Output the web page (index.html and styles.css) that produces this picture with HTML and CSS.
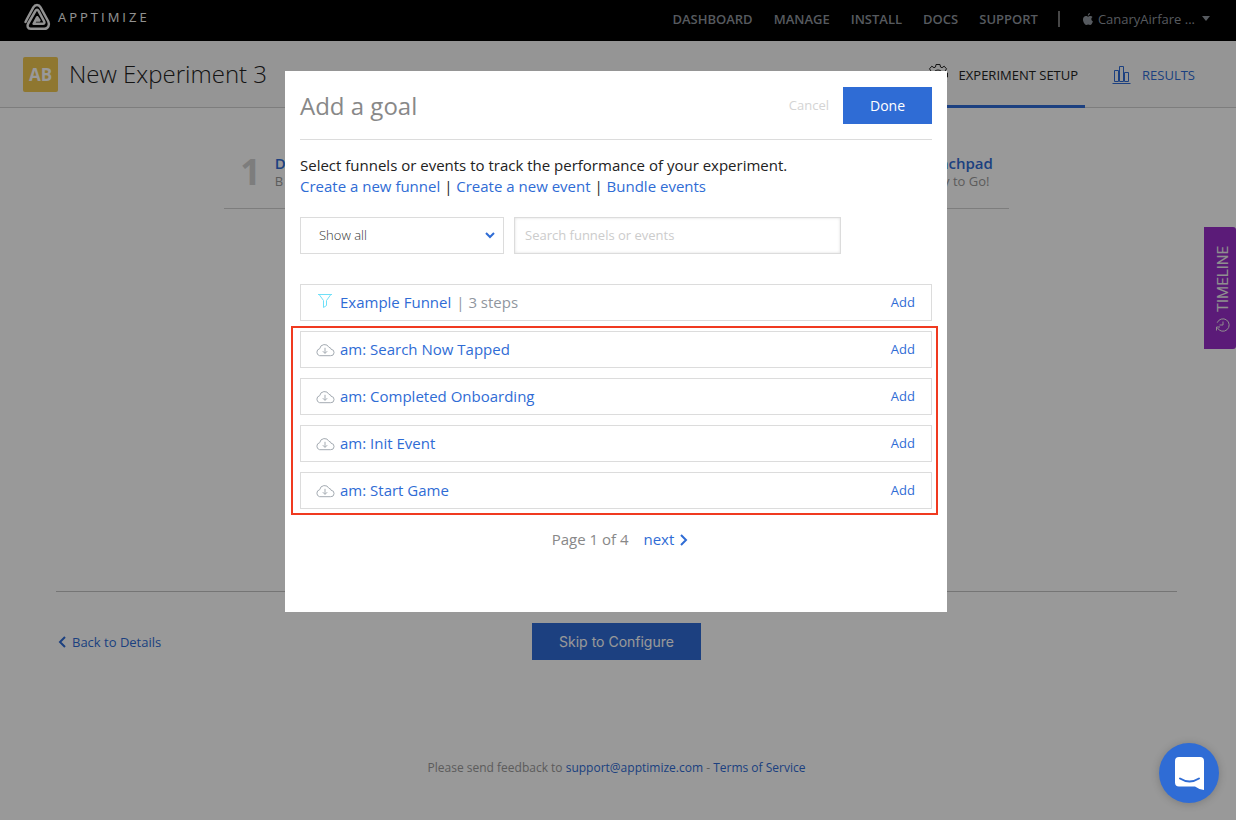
FILE: index.html
```html
<!DOCTYPE html>
<html lang="en">
<head>
<meta charset="utf-8">
<meta name="viewport" content="width=device-width, initial-scale=1">
<title>New Experiment 3 - Apptimize</title>
<link rel="stylesheet" href="styles.css">
</head>
<body>
<svg class="sprite" aria-hidden="true">
  <symbol id="cloud" viewBox="0 0 20 14">
    <path d="M4.6 12.7h11a3.2 3.2 0 0 0 .5-6.4A2.2 2.2 0 0 0 14 4.400 4.900 4.900 0 0 0 4.700 5.700a3.600 3.600 0 0 0-.1 7z" fill="none" stroke="currentColor"/>
    <path d="M10 4.800v5.400M7.800 8.200l2.200 2.200 2.200-2.200" fill="none" stroke="currentColor"/>
  </symbol>
</svg>

<header class="topbar">
  <a class="brand" href="#">
    <svg width="28" height="28" viewBox="0 0 28 28" fill="none" stroke="currentColor" stroke-width="2.500" stroke-linecap="round" stroke-linejoin="round" aria-hidden="true">
      <path d="M2.500 19 4 16 10.500 4.200c1.500-2.900 5.500-2.900 7 0l7.800 14.300c1.600 3.400-.1 7.300-3.800 7.300H7.600c-3 0-3.800-2.900-2.400-5.300l7.300-12.700c.8-1.300 2.200-1.300 3 0l5.700 10.700c.6 1.300 0 2.300-1.300 2.300h-9.300L14.200 14.200l2.200 3.200h-2.500"/>
    </svg>
    <span>APPTIMIZE</span>
  </a>
  <nav class="mainnav">
    <a href="#">DASHBOARD</a>
    <a href="#">MANAGE</a>
    <a href="#">INSTALL</a>
    <a href="#">DOCS</a>
    <a href="#">SUPPORT</a>
  </nav>
  <button class="account" type="button">
    <svg width="10" height="12" viewBox="0 0 10 12" fill="currentColor" aria-hidden="true"><path d="M7 0c.1 1.400-1 2.600-2.200 2.600C4.700 1.300 5.800.1 7 0zM9.500 4.100c-1.800 1.200-1.500 3.600.4 4.300C9.300 10.200 8.300 12 7.200 12c-.8 0-1.200-.5-2-.5s-1.200.5-1.900.5C1.700 12 0 9 0 6.600 0 4.300 1.400 3.100 2.900 3.100c.9 0 1.700.6 2.200.6.5 0 1.300-.7 2.400-.7.800 0 1.500.4 2 1.100z"/></svg>
    <span>CanaryAirfare ...</span>
    <svg class="caret" width="8" height="5" viewBox="0 0 8 5" fill="currentColor" aria-hidden="true"><path d="M0 0h8L4 5z"/></svg>
  </button>
</header>

<div class="subheader">
  <span class="badge">AB</span>
  <h1>New Experiment 3</h1>
  <nav class="tabs">
    <a class="tab current" href="#">
      <svg width="20" height="24" viewBox="0 0 20 24" fill="none" stroke="currentColor" aria-hidden="true"><path d="M8 1.500h4l.5 2.500 1.500.7 2.200-1.500 2.300 2.600-1.300 2.100.6 1.600 1.700.5v4l-1.700.5-.6 1.600 1.300 2.100-2.300 2.600-2.200-1.500-1.500.7-.5 2.500H8l-.5-2.500-1.500-.7-2.200 1.500-2.300-2.600 1.300-2.100-.6-1.600L.5 14v-4l1.700-.5.6-1.600-1.300-2.100 2.300-2.600L6 4.700 7.500 4z"/><circle cx="10" cy="12" r="5"/></svg>
      EXPERIMENT SETUP
    </a>
    <a class="tab" href="#">
      <svg width="19" height="19" viewBox="0 0 19 19" fill="none" stroke="currentColor" aria-hidden="true"><path d="M2.500 16.500v-11h4v11zM7.500 16.500v-15h4v15zM12.500 16.500v-9h4v9zM.5 18.500h18"/></svg>
      RESULTS
    </a>
  </nav>
</div>

<main class="page">
  <ol class="steps">
    <li><b>1</b><div><a href="#">D</a><span>B</span></div></li>
    <li><div><a href="#">Launchpad</a><span>Ready to Go!</span></div></li>
  </ol>
  <div class="actions">
    <a class="back" href="#"><svg width="8" height="12" viewBox="0 0 8 12" fill="none" stroke="currentColor" stroke-width="2" aria-hidden="true"><path d="M7 1 2 6l5 5"/></svg>Back to Details</a>
    <button class="primary skip" type="button">Skip to Configure</button>
  </div>
</main>

<footer class="footer">Please send feedback to <a href="#">support@apptimize.com</a> - <a href="#">Terms of Service</a></footer>

<button class="timeline" type="button">
  <svg width="14" height="14" viewBox="0 0 14 14" fill="none" stroke="currentColor" aria-hidden="true"><path d="M12.800 9.300A6.200 6.200 0 1 1 12.500 4M7 10.500V7h3.500M13.500 1.500V5H10"/></svg>
  <span>TIMELINE</span>
</button>

<div class="overlay">
  <section class="modal" role="dialog" aria-modal="true" aria-labelledby="goal-title">
    <div class="modal-head">
      <h2 id="goal-title">Add a goal</h2>
      <button class="cancel" type="button">Cancel</button>
      <button class="primary done" type="button">Done</button>
    </div>
    <p class="intro">Select funnels or events to track the performance of your experiment.</p>
    <p class="links"><a href="#">Create a new funnel</a> | <a href="#">Create a new event</a> | <a href="#">Bundle events</a></p>
    <div class="filters">
      <div class="select">
        <select aria-label="Filter goals"><option>Show all</option></select>
        <svg width="10" height="7" viewBox="0 0 10 7" fill="none" stroke="currentColor" stroke-width="2" aria-hidden="true"><path d="M1 1l4 4 4-4"/></svg>
      </div>
      <input type="text" aria-label="Search funnels or events" placeholder="Search funnels or events">
    </div>
    <ul class="goals">
      <li class="goal">
        <svg class="funnel" width="20" height="20" viewBox="0 0 20 20" fill="none" stroke="currentColor" aria-hidden="true"><path d="M3 1.500h14M4.500 2l4 5.500v7l3-2V7.500l4-5.500"/></svg>
        <a href="#">Example Funnel</a><span class="note">| 3 steps</span>
        <button type="button">Add</button>
      </li>
    </ul>
    <ul class="goals marked">
      <li class="goal"><svg width="20" height="14"><use href="#cloud"/></svg><a href="#">am: Search Now Tapped</a><button type="button">Add</button></li>
      <li class="goal"><svg width="20" height="14"><use href="#cloud"/></svg><a href="#">am: Completed Onboarding</a><button type="button">Add</button></li>
      <li class="goal"><svg width="20" height="14"><use href="#cloud"/></svg><a href="#">am: Init Event</a><button type="button">Add</button></li>
      <li class="goal"><svg width="20" height="14"><use href="#cloud"/></svg><a href="#">am: Start Game</a><button type="button">Add</button></li>
    </ul>
    <div class="pager">
      <span>Page 1 of 4</span>
      <a href="#">next<svg width="8" height="12" viewBox="0 0 8 12" fill="none" stroke="currentColor" stroke-width="2" aria-hidden="true"><path d="M1 1l5 5-5 5"/></svg></a>
    </div>
  </section>
</div>

<button class="chat" type="button" aria-label="Open chat">
  <svg width="29" height="33" viewBox="0 0 29 33" aria-hidden="true"><path d="M4 0h21a4 4 0 0 1 4 4v29q-5-.5-9-3.500H4a4 4 0 0 1-4-4V4a4 4 0 0 1 4-4z" fill="#fff"/><path d="M5 21.500q9.500 6 19 0" fill="none" stroke="#2f6cd5" stroke-width="2" stroke-linecap="round"/></svg>
</button>
</body>
</html>
```
FILE: styles.css
```css
:root {
  --blue: #2f6cd5;
  --line: #dcdcdc;
}

* { box-sizing: border-box; }

body {
  margin: 0;
  background: #fff;
  color: #222;
  font: 14px/20px "Open Sans", sans-serif;
}

a { color: var(--blue); text-decoration: none; }
h1, h2, p, ul, ol { margin: 0; padding: 0; }
ul, ol { list-style: none; }
svg { flex: none; }
.sprite { position: absolute; width: 0; height: 0; }

button {
  margin: 0;
  padding: 0;
  border: 0;
  background: none;
  color: inherit;
  font: inherit;
  cursor: pointer;
}

.primary { height: 37px; background: var(--blue); color: #fff; }

/* top bar */
.topbar {
  display: flex;
  align-items: center;
  height: 41px;
  padding: 0 26px 4px 23px;
  background: #000;
  color: #90969e;
}
.topbar a { color: inherit; }
.topbar .brand {
  display: flex;
  align-items: center;
  gap: 7px;
  margin-right: auto;
  padding-bottom: 4px;
  color: #f4f4f4;
  font-size: 13px;
  letter-spacing: 3px;
}
.mainnav {
  display: flex;
  gap: 21px;
  padding-right: 20px;
  border-right: 2px solid #777;
  font-size: 13px;
  font-weight: 600;
  line-height: 16px;
}
.account {
  display: flex;
  align-items: center;
  gap: 5px;
  margin-left: 23px;
  font-size: 13px;
  line-height: 16px;
}
.caret { margin-left: 2px; }

/* experiment header */
.subheader {
  display: flex;
  align-items: center;
  height: 67px;
  padding: 0 41px 0 23px;
  border-bottom: 1px solid #d0d0d0;
  background: #f8f8f8;
}
.badge {
  width: 35px;
  border-radius: 2px;
  background: #eec650;
  color: #fff;
  font-size: 17px;
  font-weight: 700;
  line-height: 35px;
  text-align: center;
}
.subheader h1 {
  margin-left: 11px;
  font-size: 24px;
  font-weight: 300;
  line-height: 36px;
}
.tabs { display: flex; gap: 27px; height: 67px; margin-left: auto; }
.tab { display: flex; align-items: center; gap: 11px; padding-top: 1px; font-size: 13px; }
.tab.current { padding: 4px 7px 0 0; border-bottom: 3px solid var(--blue); color: #222; }

/* page behind the dialog */
.page { padding: 40px 59px 0 56px; }
.steps {
  display: flex;
  justify-content: space-between;
  width: 70%;
  height: 61px;
  margin: 0 auto;
  padding: 0 16px;
  border-bottom: 1px solid #d0d0d0;
}
.steps li { display: flex; gap: 14px; }
.steps b { color: #d0d0d0; font-size: 36px; line-height: 48px; }
.steps div { display: flex; flex-direction: column; padding-top: 5px; }
.steps a { font-size: 15px; font-weight: 600; }
.steps span { color: #999; font-size: 13px; line-height: 16px; }

.actions {
  display: grid;
  grid-template-columns: 1fr auto 1fr;
  align-items: center;
  margin-top: 382px;
  padding-top: 31px;
  border-top: 1px solid #c4c4c4;
}
.back { display: flex; align-items: center; gap: 6px; padding-left: 2px; font-size: 13px; }
.skip { padding: 0 27px; font-family: Inter, sans-serif; font-size: 14px; }

.footer {
  margin-top: 98px;
  padding-right: 3px;
  color: #999;
  font-size: 12px;
  text-align: center;
}

.timeline {
  position: fixed;
  top: 227px;
  right: 0;
  display: flex;
  align-items: center;
  gap: 6px;
  width: 32px;
  height: 122px;
  padding: 17px 11px 17px 5px;
  border-radius: 3px 0 0 3px;
  background: #982dc8;
  color: #eee;
  font: 15px/16px Roboto, sans-serif;
  writing-mode: vertical-rl;
  transform: rotate(180deg);
}

/* dialog */
.overlay {
  position: fixed;
  inset: 0;
  padding: 71px 16px 0 12px;
  background: rgba(0, 0, 0, .4);
}
.modal {
  max-width: 662px;
  margin: 0 auto;
  padding: 16px 15px 62px;
  background: #fff;
  font-size: 15px;
  line-height: 21px;
}
.modal-head {
  display: flex;
  align-items: center;
  padding-bottom: 15px;
  border-bottom: 1px solid var(--line);
}
.modal h2 { margin-right: auto; color: #888; font-size: 24px; font-weight: 400; line-height: 36px; }
.cancel { margin-right: 14px; color: #d4d4d4; font-size: 13px; }
.done { width: 89px; font-size: 14px; }
.intro { margin-top: 15px; }

.filters { display: flex; gap: 10px; margin-top: 20px; }
.select { position: relative; width: 204px; color: var(--blue); }
.select svg { position: absolute; right: 9px; top: 15px; pointer-events: none; }
.filters select,
.filters input {
  width: 100%;
  height: 37px;
  border: 1px solid var(--line);
  border-radius: 0;
  background: #fff;
  font: 13px "Open Sans", sans-serif;
}
.filters select { padding: 0 18px 1px; color: #333; font-weight: 300; appearance: none; }
.filters input { max-width: 327px; padding: 0 10px 1px; box-shadow: inset 0 0 3px #ddd; }
.filters input::placeholder { color: #ccc; }

.goals { display: flex; flex-direction: column; gap: 10px; margin-top: 30px; }
.marked { margin: 5px -6px 0 -9px; padding: 3px 4px 4px 7px; border: 2px solid #f03a20; }
.goal {
  display: flex;
  align-items: center;
  height: 37px;
  padding: 0 16px 0 14px;
  border: 1px solid var(--line);
  color: #a4abb2;
}
.goal a { margin-left: 5px; }
.goal .note { margin-left: 5px; color: #90969e; }
.goal button { margin-left: auto; color: var(--blue); font-size: 13px; }
.funnel { color: #6fe0f8; }

.pager { display: flex; justify-content: center; gap: 15px; margin-top: 14px; padding-left: 8px; color: #888; }
.pager a { display: flex; align-items: center; gap: 6px; }

.chat {
  position: fixed;
  right: 17px;
  bottom: 17px;
  display: flex;
  align-items: center;
  justify-content: center;
  width: 60px;
  height: 60px;
  border-radius: 50%;
  background: var(--blue);
  box-shadow: 0 1px 8px rgba(0, 0, 0, .2);
}
```
